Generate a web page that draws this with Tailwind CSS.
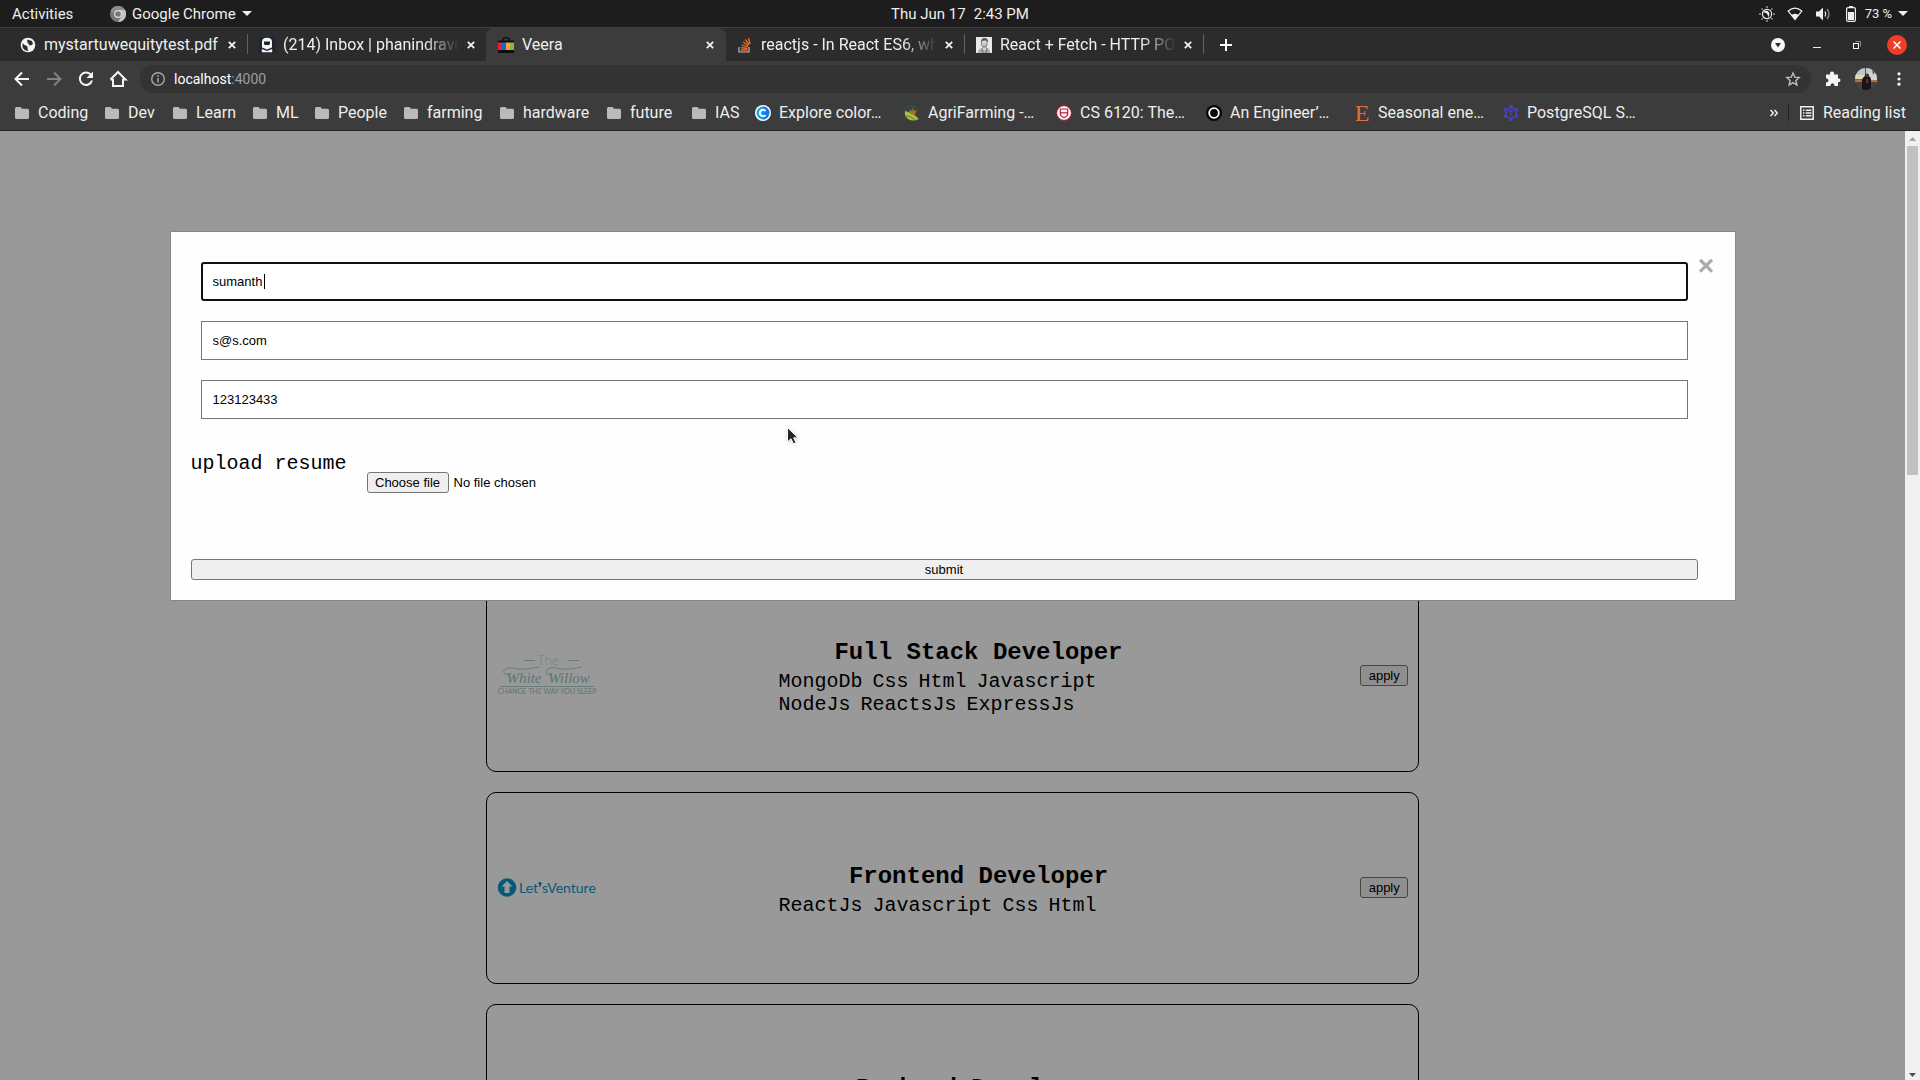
<!DOCTYPE html>
<html lang="en">
<head>
<meta charset="utf-8">
<title>Veera</title>
<script src="https://cdn.jsdelivr.net/npm/@tailwindcss/browser@4"></script>
</head>
<body class="h-screen overflow-hidden flex flex-col bg-[#3c3c3c] font-['Roboto',sans-serif] text-[#eeeeee]">

<svg class="hidden" aria-hidden="true">
  <symbol id="folder" viewBox="0 0 14 12"><path d="M0 1.5Q0 0 1.5 0H5.5L7 1.7H12.5Q14 1.7 14 3.2V10.5Q14 12 12.5 12H1.5Q0 12 0 10.5Z" fill="#bababa"/></symbol>
  <symbol id="x" viewBox="0 0 8 8"><path d="M.8.8 7.2 7.2M7.2.8.8 7.2" stroke="#f2f2f2" stroke-width="1.8"/></symbol>
  <symbol id="caret" viewBox="0 0 10 5"><path d="M0 0H10L5 5Z" fill="#f0f0f0"/></symbol>
</svg>

<!-- Desktop panel -->
<header class="grid grid-cols-3 items-center h-[27px] shrink-0 bg-[#1d1d1d] px-3 text-[15px] leading-5">
  <div class="flex items-center">
    <button class="w-[98px] text-left">Activities</button>
    <button class="flex items-center gap-[6px]">
      <svg class="size-4" viewBox="0 0 16 16"><circle cx="8" cy="8" r="8" fill="#777"/><path d="M8 4H15A8 8 0 0 1 8 16L11.5 10Z" fill="#c4c4c4"/><path d="M1 4A8 8 0 0 1 15 4H8L4.5 10Z" fill="#8b8b8b"/><circle cx="8" cy="8" r="3.9" fill="#ddd"/><circle cx="8" cy="8" r="2.8" fill="#777"/></svg>
      <span>Google Chrome</span>
      <svg class="w-[10px] h-[5px]"><use href="#caret"/></svg>
    </button>
  </div>
  <button class="justify-self-center flex gap-2"><span>Thu Jun 17</span><span>2:43 PM</span></button>
  <div class="flex justify-end items-center gap-3">
    <svg class="size-4" viewBox="0 0 16 16"><circle cx="8" cy="8" r="4.6" fill="none" stroke="#e8e8e8" stroke-width="1.2"/><path d="M7 4A4.400 4.400 0 0 0 12 9.500Q10 12 7.500 11Q4 9 7 4" fill="#f2f2f2" transform="rotate(180 8 8)"/><path d="M8 0V2M8 14V16M0 8H2M14 8H16M2.500 2.500 3.800 3.800M12.200 12.200 13.500 13.500M2.500 13.500 3.800 12.200M12.200 3.800 13.500 2.500" stroke="#999" stroke-width="1.5"/></svg>
    <svg class="size-4" viewBox="0 0 16 16"><path d="M1.200 5Q8-.8 14.800 5L8 13.600Z" fill="none" stroke="#f0f0f0" stroke-width="1.200"/><path d="M4.500 9Q8 6.500 11.500 9L8 13.600Z" fill="#f0f0f0"/></svg>
    <svg class="size-4" viewBox="0 0 16 16"><path d="M1 5.500H4L8 1.500V14.500L4 10.500H1Z" fill="#f0f0f0"/><path d="M10 5.500Q11.600 8 10 10.500" fill="none" stroke="#eee" stroke-width="1.300"/><path d="M12 3Q16 8 12 13" fill="none" stroke="#888" stroke-width="1.400"/></svg>
    <div class="flex items-center gap-[6px] text-[13px]">
      <svg class="size-4" viewBox="0 0 16 16"><path d="M6 0H10V2H6Z" fill="#eee"/><rect x="3.600" y="1.600" width="8.800" height="13.800" rx="1.500" fill="none" stroke="#eee" stroke-width="1.200"/><path d="M5 6H11V14H5Z" fill="#eee"/></svg>
      <span>73 %</span>
      <svg class="w-[10px] h-[5px]"><use href="#caret"/></svg>
    </div>
  </div>
</header>

<!-- Tab strip -->
<nav class="flex h-[34px] shrink-0 bg-[#2c2c2c] border-t border-[#3f3f3f] pl-2 pr-[13px] text-base" aria-label="Tabs">
  <div class="flex items-center gap-2 w-[239px] pl-3 pr-[11px]">
    <svg class="size-4 shrink-0" viewBox="0 0 16 16"><circle cx="8" cy="8" r="7.300" fill="#f5f5f5"/><path d="M2.500 6Q5 9 6 8.500Q8 9 7.500 12L8.500 14Q4 14 2.500 10ZM7 2.500 12 4 13 7Q10 9.500 9 7.500L7.500 5.500Z" fill="#2c2c2c"/></svg>
    <span class="flex-1 min-w-0 overflow-hidden whitespace-nowrap">mystartuwequitytest.pdf</span>
    <button aria-label="Close tab"><svg class="size-2"><use href="#x"/></svg></button>
  </div>
  <div class="w-px h-5 my-[6px] bg-[#606060]"></div>
  <div class="flex items-center gap-2 w-[238px] pl-[11px] pr-[11px]">
    <svg class="size-4 shrink-0" viewBox="0 0 16 16"><rect width="16" height="16" rx="2" fill="#1b2430"/><path d="M3 10.500V5Q3 .8 8 .8T13 5V10.500L8 12.500Z" fill="#f4f4f4"/><path d="M5 4.500H11V6.500Q11 8 9.500 8H6.500Q5 8 5 6.500Z" fill="#1b2430"/><path d="M2.800 12 8 14 13.200 12V15.300H2.800Z" fill="#f4f4f4"/></svg>
    <span class="flex-1 min-w-0 overflow-hidden whitespace-nowrap mask-r-from-80% mask-r-to-100%">(214) Inbox | phanindrave</span>
    <button aria-label="Close tab"><svg class="size-2"><use href="#x"/></svg></button>
  </div>
  <div class="flex items-center gap-2 w-[240px] pl-3 pr-3 rounded-t-lg bg-[#3c3c3c]">
    <svg class="size-4 shrink-0" viewBox="0 0 16 16"><path d="M4.500 4Q4.500 .6 8 .6T11.500 4" fill="none" stroke="#0c0c0c" stroke-width="1.200"/><path d="M0 3.500H16V16H0Z" fill="#0c0c0c"/><path d="M0 5.500H4V13H0Z" fill="#f5163c"/><path d="M4 5.500H8V13H4Z" fill="#0b6fd0"/><path d="M8 5.500H12V13H8Z" fill="#f7a22b"/><path d="M12 5.500H16V13H12Z" fill="#8cb43a"/></svg>
    <span class="flex-1">Veera</span>
    <button aria-label="Close tab"><svg class="size-2"><use href="#x"/></svg></button>
  </div>
  <div class="flex items-center gap-2 w-[238px] pl-[11px] pr-[11px]">
    <svg class="size-4 shrink-0" viewBox="0 0 16 16"><path d="M2 10V15H12V10" fill="none" stroke="#bbb" stroke-width="1.200"/><path d="M4 13H10.500M4 10.700 10.500 11.500M4.500 8 10.700 9.800M6 5 11.300 8.600M8.200 2.500 12.200 7.500M11.500 1 13 7" stroke="#f06a28" stroke-width="1.300"/></svg>
    <span class="flex-1 min-w-0 overflow-hidden whitespace-nowrap mask-r-from-80% mask-r-to-100%">reactjs - In React ES6, wh</span>
    <button aria-label="Close tab"><svg class="size-2"><use href="#x"/></svg></button>
  </div>
  <div class="w-px h-5 my-[6px] bg-[#606060]"></div>
  <div class="flex items-center gap-2 w-[238px] pl-[11px] pr-[11px]">
    <svg class="size-4 shrink-0" viewBox="0 0 16 16"><path d="M0 0H16V16H0Z" fill="#e9e9e9"/><path d="M5 5Q5 1 8.500 1T12 5L11 5 10 3.500 6 4V7Z" fill="#555"/><path d="M5.500 5V8Q6 11 8.500 11T11 8V5" fill="#ccc" stroke="#777" stroke-width=".8"/><path d="M2 16Q2 12 6 11L8.500 13.500 11 11Q14 12 14.500 16Z" fill="#aaa"/><path d="M6 11 7 16M11 11 10 16M7 9H10" stroke="#666" stroke-width=".8"/></svg>
    <span class="flex-1 min-w-0 overflow-hidden whitespace-nowrap mask-r-from-80% mask-r-to-100%">React + Fetch - HTTP PO</span>
    <button aria-label="Close tab"><svg class="size-2"><use href="#x"/></svg></button>
  </div>
  <div class="w-px h-5 my-[6px] bg-[#606060]"></div>
  <button class="pl-4" aria-label="New tab"><svg class="size-3" viewBox="0 0 12 12"><path d="M6 0V12M0 6H12" stroke="#fff" stroke-width="2"/></svg></button>
  <div class="ml-auto flex items-center gap-5">
    <button aria-label="Search tabs"><svg class="size-5" viewBox="0 0 20 20"><circle cx="11" cy="10" r="7" fill="#f8f8f8"/><path d="M8 8H14L11 12.500Z" fill="#2c2c2c"/></svg></button>
    <button aria-label="Minimize"><svg class="size-5" viewBox="0 0 20 20"><path d="M6 12.500H14" stroke="#eee"/></svg></button>
    <button aria-label="Restore"><svg class="size-5" viewBox="0 0 20 20"><path d="M8.500 6.500H13.500V11.500" fill="none" stroke="#888"/><rect x="6.500" y="8.500" width="5" height="5" fill="none" stroke="#fff"/></svg></button>
    <button aria-label="Close window"><svg class="size-5" viewBox="0 0 20 20"><circle cx="10" cy="10" r="10" fill="#ee3e26"/><path d="M6.500 6.500 13.500 13.500M13.500 6.500 6.500 13.500" stroke="#fff" stroke-width="1.500"/></svg></button>
  </div>
</nav>

<!-- Toolbar -->
<div class="flex items-center gap-3 h-9 shrink-0 pl-3 pr-[11px]">
  <button aria-label="Back"><svg class="size-5" viewBox="0 0 20 20"><path d="M17 10H4.500M10 3.500 3.500 10 10 16.500" fill="none" stroke="#f4f4f4" stroke-width="2"/></svg></button>
  <button aria-label="Forward"><svg class="size-5" viewBox="0 0 20 20"><path d="M3 10H15.500M10 3.500 16.500 10 10 16.500" fill="none" stroke="#828282" stroke-width="2"/></svg></button>
  <button aria-label="Reload"><svg class="size-5" viewBox="0 0 20 20"><path d="M15 6A6.200 6.200 0 1 0 16 11.500" fill="none" stroke="#f4f4f4" stroke-width="2"/><path d="M17 2.500V9H10.500Z" fill="#f4f4f4"/></svg></button>
  <button aria-label="Home"><svg class="size-5" viewBox="0 0 20 20"><path d="M5 10V17H15V10M2.500 10.500 10 3 17.500 10.500H14.500M2.500 10.500H5.500" fill="none" stroke="#f4f4f4" stroke-width="2"/></svg></button>
  <div class="flex-1 flex items-center gap-2 h-7 rounded-full bg-[#333333] pl-[10px] pr-2 text-sm">
    <svg class="size-4" viewBox="0 0 16 16"><circle cx="8" cy="8" r="6.300" fill="none" stroke="#a5a9ac" stroke-width="1.400"/><path d="M8 7V11.500M8 4.300V5.900" stroke="#a5a9ac" stroke-width="1.500"/></svg>
    <a href="#" class="flex-1 text-[#9aa0a6]"><span class="text-white">localhost</span>:4000</a>
    <button aria-label="Bookmark"><svg class="size-5" viewBox="0 0 20 20"><path d="M10 4 11.800 8.200 16.200 8.600 12.900 11.500 13.900 16 10 13.600 6.100 16 7.100 11.500 3.800 8.600 8.200 8.200Z" fill="none" stroke="#bdbdbd" stroke-width="1.400"/></svg></button>
  </div>
  <button aria-label="Extensions"><svg class="size-5" viewBox="0 0 20 20"><path d="M3 5.500H7Q6.500 2.500 9 2.500T11 5.500H15V9.500Q17.500 9 17.500 11.200T15 13.200V17H11.500Q11.500 14.300 9.500 14.300T7.300 17H3V13.500Q5.500 13.500 5.500 11.500T3 9.300Z" fill="#f4f4f4"/></svg></button>
  <button aria-label="Profile"><svg class="size-[22px]" viewBox="0 0 22 22"><clipPath id="av"><circle cx="11" cy="11" r="11"/></clipPath><g clip-path="url(#av)"><path d="M0 0H22V22H0Z" fill="#77685a"/><path d="M0 0H22V8H0Z" fill="#b9cbd0"/><path d="M0 7H9V11H0Z" fill="#e6d6b4"/><path d="M14 4 22 6V15H14Z" fill="#d8d2c8"/><path d="M10 0H11V8H10ZM17 0H22L18 7Z" fill="#46525a"/><path d="M0 12H22V14H0Z" fill="#a8764c"/><path d="M0 14H22V22H0Z" fill="#4a403a"/><path d="M7 22V12Q8 8 12 8T16 12V22Z" fill="#191418"/><circle cx="12" cy="7.500" r="2" fill="#4b2f26"/><path d="M11 11H13V15H11Z" fill="#6b2f2c"/></g></svg></button>
  <button aria-label="Menu"><svg class="size-5" viewBox="0 0 20 20"><g fill="#f4f4f4"><circle cx="10" cy="4.800" r="1.600"/><circle cx="10" cy="10" r="1.600"/><circle cx="10" cy="15.200" r="1.600"/></g></svg></button>
</div>

<!-- Bookmarks bar -->
<nav class="flex items-center h-[34px] shrink-0 border-b border-[#232323] pl-[15px] pr-[14px] pb-1 pt-[2px] text-base leading-6 whitespace-nowrap" aria-label="Bookmarks">
  <a href="#" class="flex items-center gap-[9px] w-[90px]"><svg class="w-[14px] h-3"><use href="#folder"/></svg>Coding</a>
  <a href="#" class="flex items-center gap-[9px] w-[68px]"><svg class="w-[14px] h-3"><use href="#folder"/></svg>Dev</a>
  <a href="#" class="flex items-center gap-[9px] w-[80px]"><svg class="w-[14px] h-3"><use href="#folder"/></svg>Learn</a>
  <a href="#" class="flex items-center gap-[9px] w-[62px]"><svg class="w-[14px] h-3"><use href="#folder"/></svg>ML</a>
  <a href="#" class="flex items-center gap-[9px] w-[89px]"><svg class="w-[14px] h-3"><use href="#folder"/></svg>People</a>
  <a href="#" class="flex items-center gap-[9px] w-[96px]"><svg class="w-[14px] h-3"><use href="#folder"/></svg>farming</a>
  <a href="#" class="flex items-center gap-[9px] w-[107px]"><svg class="w-[14px] h-3"><use href="#folder"/></svg>hardware</a>
  <a href="#" class="flex items-center gap-[9px] w-[85px]"><svg class="w-[14px] h-3"><use href="#folder"/></svg>future</a>
  <a href="#" class="flex items-center gap-[9px] w-[63px]"><svg class="w-[14px] h-3"><use href="#folder"/></svg>IAS</a>
  <a href="#" class="flex items-center gap-2 w-[149px]"><svg class="size-4" viewBox="0 0 16 16"><circle cx="8" cy="8" r="8" fill="#fff"/><circle cx="8" cy="8" r="6.400" fill="#0aa4f5"/><path d="M8 1.600A6.400 6.400 0 0 1 8 14.400Z" fill="#1677ea"/><path d="M10.500 6A3.200 3.200 0 1 0 10.500 10" fill="none" stroke="#fff" stroke-width="2"/></svg>Explore color…</a>
  <a href="#" class="flex items-center gap-2 w-[152px]"><svg class="size-4" viewBox="0 0 16 16"><path d="M1 6A7 7 0 0 1 14 5" fill="none" stroke="#1c5a50" stroke-width="1.500"/><path d="M1 6Q8 7 15 14Q9 17 4 14Q0 11 1 6Z" fill="#a6bf3c"/><path d="M5 8 6 4 8 6 9 2 10 6 13 5 11 10Z" fill="#a56b2f"/><path d="M2 11Q7 11 11 15" stroke="#5f8a2c" fill="none"/></svg>AgriFarming -…</a>
  <a href="#" class="flex items-center gap-2 w-[150px]"><svg class="size-4" viewBox="0 0 16 16"><circle cx="8" cy="8" r="7.300" fill="#fff" stroke="#c0203a" stroke-width="1"/><path d="M4.300 4H11.700V9Q11.700 11 8 12.800Q4.300 11 4.300 9ZM4.300 7.800H11.700" fill="none" stroke="#b31b34" stroke-width="1.200"/></svg>CS 6120: The…</a>
  <a href="#" class="flex items-center gap-2 w-[148px]"><svg class="size-4" viewBox="0 0 16 16"><circle cx="8" cy="8" r="8" fill="#050505"/><circle cx="8" cy="8" r="4.800" fill="none" stroke="#fff" stroke-width="1.800"/></svg>An Engineer’…</a>
  <a href="#" class="flex items-center gap-2 w-[149px]"><span class="w-4 text-center font-['Liberation_Serif',serif] text-[24px] leading-6 text-[#e0703a]">E</span>Seasonal ene…</a>
  <a href="#" class="flex items-center gap-2"><svg class="size-4" viewBox="0 0 16 16"><circle cx="8" cy="8" r="5.300" fill="none" stroke="#4a3fc4" stroke-width="1.500"/><path d="M8 0V3M8 13V16M1 4 3.600 5.500M12.400 10.500 15 12M1 12 3.600 10.500M12.400 5.500 15 4" stroke="#4a3fc4" stroke-width="3"/><path d="M5.500 6H10.500M8 6V11" stroke="#4a3fc4" stroke-width="1.300"/></svg>PostgreSQL S…</a>
  <button class="ml-auto mr-[10px]" aria-label="More bookmarks"><svg class="size-2" viewBox="0 0 8 8"><path d="M.5 1 3.300 4 .5 7M4.500 1 7.300 4 4.500 7" fill="none" stroke="#eee" stroke-width="1.500"/></svg></button>
  <div class="w-px h-4 bg-[#202020] mr-[11px]"></div>
  <button class="flex items-center gap-[9px]"><svg class="size-[14px]" viewBox="0 0 14 14"><path d="M.8.8H13.200V13.200H.8ZM3 4.200H4.500M5.800 4.200H11.300M3 7H4.500M5.800 7H11.300M3 9.800H4.500M5.800 9.800H11.300" fill="none" stroke="#f0f0f0" stroke-width="1.500"/></svg>Reading list</button>
</nav>

<!-- Page viewport -->
<div class="flex flex-1 min-h-0">
  <main class="relative flex-1 overflow-hidden bg-white text-black font-['Liberation_Mono',monospace] text-[20px] leading-[23px]">
    <section class="flex flex-col gap-5 w-[49%] mx-auto pt-[449px]">
      <article class="flex items-center justify-between h-48 p-[10px] border border-black rounded-[10px]">
        <svg class="w-[100px] h-[46px]" viewBox="0 0 100 46" role="img" aria-label="The White Willow">
          <g text-anchor="middle">
            <text x="51" y="12" font-family="Lato" font-weight="300" font-size="13" fill="#c4dcd9">The</text>
            <text x="27" y="30" font-family="Liberation Serif" font-style="italic" font-size="15" fill="#9cc6c1">White</text>
            <text x="72" y="30" font-family="Liberation Serif" font-style="italic" font-size="15" fill="#9cc6c1">Willow</text>
            <text x="50" y="41" font-family="Lato" font-size="7" fill="#9cc6c1">CHANGE THE WAY YOU SLEEP</text>
          </g>
          <path d="M27 7.500H38M71 7.500H82M3 33.500H97M13 22Q5 22 7 17Q10 13 20 16Q30 17 42 14M54 22Q47 21 50 17Q54 13 64 16Q74 17 85 14" fill="none" stroke="#9cc6c1" stroke-width=".8"/>
        </svg>
        <div class="w-[400px] flex flex-col gap-1 pt-[3px]">
          <h2 class="text-2xl leading-[27px] font-bold text-center">Full Stack Developer</h2>
          <div class="flex flex-wrap"><span class="mr-[10px]">MongoDb</span><span class="mr-[10px]">Css</span><span class="mr-[10px]">Html</span><span class="mr-[10px]">Javascript</span><span class="mr-[10px]">NodeJs</span><span class="mr-[10px]">ReactsJs</span><span class="mr-[10px]">ExpressJs</span></div>
        </div>
        <button class="h-[21px] w-12 mb-[2px] border border-[#767676] rounded-[3px] bg-[#efefef] font-['Liberation_Sans',sans-serif] text-[13px] leading-[15px]">apply</button>
      </article>
      <article class="flex items-center justify-between h-48 p-[10px] border border-black rounded-[10px]">
        <svg class="w-[100px] h-5" viewBox="0 0 100 20" role="img" aria-label="LetsVenture">
          <circle cx="10" cy="9.500" r="9.300" fill="#0a95cf"/><path d="M10 3 15.500 8.500H12.500V15H7.500V8.500H4.500Z" fill="#fff"/>
          <text x="22" y="15" font-family="Lato" font-size="14" fill="#0a95cf">Let</text>
          <path d="M43 3.500 45.500 6H44V8.500H42V6H40.500Z" fill="#0a95cf"/>
          <text x="45" y="15" font-family="Lato" font-size="14" fill="#0a95cf">sVenture</text>
        </svg>
        <div class="w-[400px] flex flex-col gap-1 pt-[3px]">
          <h2 class="text-2xl leading-[27px] font-bold text-center">Frontend Developer</h2>
          <div class="flex flex-wrap"><span class="mr-[10px]">ReactJs</span><span class="mr-[10px]">Javascript</span><span class="mr-[10px]">Css</span><span class="mr-[10px]">Html</span></div>
        </div>
        <button class="h-[21px] w-12 mb-[2px] border border-[#767676] rounded-[3px] bg-[#efefef] font-['Liberation_Sans',sans-serif] text-[13px] leading-[15px]">apply</button>
      </article>
      <article class="flex items-center justify-center h-48 p-[10px] border border-black rounded-[10px]">
        <div class="w-[400px] ml-[52px] pb-[23px]">
          <h2 class="text-2xl leading-[27px] font-bold text-center">Backend Developer</h2>
        </div>
      </article>
    </section>

    <!-- Application dialog over a dimmed page -->
    <div class="absolute inset-0 bg-black/40 pt-[100px]">
      <div role="dialog" aria-label="Apply" class="flex items-start w-[calc(80%+42px)] mx-auto p-5 border border-[#888888] bg-[#fefefe]">
        <form class="flex-1 flex flex-col">
          <div class="flex flex-col gap-5 p-[10px] font-['Liberation_Sans',sans-serif] text-[13px]">
            <div class="relative flex">
              <input aria-label="Name" value="sumanth" class="w-full h-[39px] border-2 border-[#101010] rounded-[3px] bg-white px-[10px] outline-none">
              <span class="absolute left-[63px] top-3 w-px h-[15px] bg-black"></span>
            </div>
            <input type="email" aria-label="Email" value="s@s.com" class="w-full h-[39px] border border-[#767676] bg-white px-[11px]">
            <input type="tel" aria-label="Phone" value="123123433" class="w-full h-[39px] border border-[#767676] bg-white px-[11px]">
          </div>
          <div class="flex items-start gap-5 h-[130px] pt-[23px]">
            <span id="resume-label">upload resume</span>
            <label class="flex items-center gap-[5px] mt-5 font-['Liberation_Sans',sans-serif] text-[13px] leading-[15px]">
              <input type="file" class="sr-only" aria-labelledby="resume-label">
              <span class="flex items-center justify-center h-[21px] w-[82px] border border-[#767676] rounded-[3px] bg-[#efefef]">Choose file</span>
              <span>No file chosen</span>
            </label>
          </div>
          <button type="submit" class="h-[21px] border border-[#767676] rounded-[3px] bg-[#efefef] font-['Liberation_Sans',sans-serif] text-[13px] leading-[15px]">submit</button>
        </form>
        <button aria-label="Close" class="w-[17px] text-center font-['Liberation_Sans',sans-serif] font-bold text-[28px] leading-7 text-[#aaaaaa]">×</button>
      </div>
    </div>

    <svg class="absolute left-[786px] top-[295px] w-4 h-[20px] drop-shadow" viewBox="0 0 16 20" aria-hidden="true"><path d="M1.500 1.500V16L5 12.800 7.500 18 10 16.800 7.700 11.800H12Z" fill="#262626" stroke="#fff"/></svg>
  </main>

  <div class="flex flex-col w-[15px] shrink-0 bg-[#f1f1f1] items-center" aria-hidden="true">
    <svg class="w-[7px] h-[15px]" viewBox="0 0 7 15"><path d="M0 10H7L3.500 6Z" fill="#a3a3a3"/></svg>
    <div class="w-[11px] h-[329px] bg-[#c1c1c1]"></div>
    <svg class="w-[7px] h-[15px] mt-auto" viewBox="0 0 7 15"><path d="M0 8H7L3.500 12Z" fill="#505050"/></svg>
  </div>
</div>
</body>
</html>
